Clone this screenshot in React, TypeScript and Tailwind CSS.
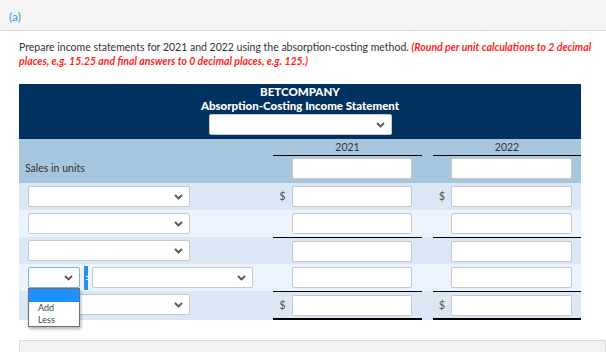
import React from "react";

const DARK_ROW = "bg-[#dce7f6]";
const LIGHT_ROW = "bg-[#ebf3fd]";

function Chevron() {
  return (
    <svg width="9" height="6" viewBox="0 0 9 6" className="shrink-0">
      <path d="M1 1l3.5 3.5L8 1" stroke="#555" strokeWidth="1.8" fill="none" />
    </svg>
  );
}

function Select({ w, focus }: { w: string; focus?: boolean }) {
  return (
    <div
      className={`${w} h-[21px] bg-white rounded-[2px] border flex items-center justify-end pr-[6px] ${
        focus ? "border-[#7fb2e5]" : "border-[#c9c9c9]"
      }`}
    >
      <Chevron />
    </div>
  );
}

function Input({ w }: { w: string }) {
  return <div className={`${w} h-[21px] bg-white rounded-[2px] border border-[#c9c9c9]`} />;
}

type Row = { bg: string; dollar?: boolean; line?: boolean; last?: boolean; special?: boolean };

const ROWS: Row[] = [
  { bg: DARK_ROW, dollar: true },
  { bg: LIGHT_ROW },
  { bg: DARK_ROW, line: true },
  { bg: LIGHT_ROW, special: true },
  { bg: DARK_ROW, dollar: true, line: true, last: true },
];

export default function App() {
  return (
    <div className="w-[606px] h-[352px] overflow-hidden bg-white font-['Lato','Noto_Sans',sans-serif] text-[#333]">
      <div className="h-[31px] bg-[#f4f4f4] border-b border-[#dcdcdc] pl-[9px] pt-[3px]">
        <span className="text-[12px] leading-[14px] text-[#2b9be0]">(a)</span>
      </div>

      <p className="px-[19px] pt-[9px] text-[10.5px] leading-[14px] text-[#333] whitespace-nowrap">
        Prepare income statements for 2021 and 2022 using the absorption-costing method.{" "}
        <span className="text-[#ff1f1f] font-bold italic">(Round per unit calculations to 2 decimal</span>
        <br />
        <span className="text-[#ff1f1f] font-bold italic">
          places, e.g. 15.25 and final answers to 0 decimal places, e.g. 125.)
        </span>
      </p>

      <div className="ml-[19px] mt-[16px] w-[562px]">
        <div className="h-[55px] bg-[#00315f] flex flex-col items-center text-white font-black text-[11.5px] pt-[1px]">
          <div className="leading-[14px]">BETCOMPANY</div>
          <div className="leading-[14px]">Absorption-Costing Income Statement</div>
          <div className="mt-[1px]">
            <Select w="w-[183px]" />
          </div>
        </div>

        <div className="grid grid-cols-[254px_149px_11px_148px] bg-[#a6c5de] h-[44px]">
          <div className="flex items-end pl-[6px] pb-[8px] text-[10.5px] leading-[14px]">Sales in units</div>
          <div className="flex flex-col">
            <div className="h-[17px] leading-[16px] text-center text-[10.5px] border-b border-black">2021</div>
            <div className="pl-[19px] mt-[2px]">
              <Input w="w-[120px]" />
            </div>
          </div>
          <div />
          <div className="flex flex-col">
            <div className="h-[17px] leading-[16px] text-center text-[10.5px] border-b border-black">2022</div>
            <div className="pl-[18px] mt-[2px]">
              <Input w="w-[121px]" />
            </div>
          </div>
        </div>

        {ROWS.map((r, i) => (
          <div key={i} className={`grid grid-cols-[254px_149px_11px_148px] ${r.bg}`}>
            <div className="h-[27px] flex items-center pl-[9px] gap-[4px]">
              {r.special ? (
                <>
                  <div className="relative">
                    <Select w="w-[52px]" focus />
                    <div className="absolute left-0 top-full w-[52px] bg-white border border-[#707070] shadow-[1px_2px_3px_rgba(0,0,0,0.3)] z-10 text-[9px] leading-[12px] text-[#444]">
                      <div className="h-[13px] bg-[#1e90ff]" />
                      <div className="pl-[9px]">Add</div>
                      <div className="pl-[9px]">Less</div>
                    </div>
                  </div>
                  <div className="w-[4px] h-[24px] bg-[#2a8ef0] flex flex-col items-end justify-center gap-[2px]">
                    <div className="w-[2px] h-[1px] bg-white" />
                    <div className="w-[2px] h-[1px] bg-white" />
                  </div>
                  <Select w="w-[161px]" />
                </>
              ) : (
                <Select w="w-[162px]" />
              )}
            </div>
            {[0, 1].map((c) => (
              <React.Fragment key={c}>
                {c === 1 && <div />}
                <div
                  className={`flex items-center ${r.line ? "border-t border-black" : ""} ${
                    r.last ? "h-[29px] border-b-2 border-b-black" : "h-[27px]"
                  }`}
                >
                  <div className={`${c === 0 ? "w-[19px]" : "w-[18px]"} text-center text-[11px] text-[#555]`}>
                    {r.dollar ? "$" : ""}
                  </div>
                  <Input w={c === 0 ? "w-[120px]" : "w-[121px]"} />
                </div>
              </React.Fragment>
            ))}
          </div>
        ))}
      </div>

      <div className="ml-[19px] mt-[20px] h-[30px] bg-[#f3f3f3] border border-[#dcdcdc] rounded-tl-[2px]" />
    </div>
  );
}
